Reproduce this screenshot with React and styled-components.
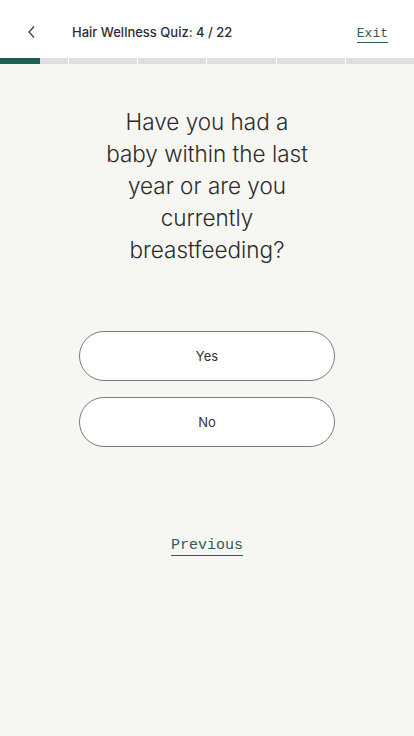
import React from 'react';
import styled, { createGlobalStyle } from 'styled-components';

const GlobalStyle = createGlobalStyle`
  html, body {
    margin: 0;
    padding: 0;
    background: #f6f6f2;
  }
  body {
    font-family: Inter, "Liberation Sans", sans-serif;
    color: #2b2b2b;
  }
`;

const Page = styled.div`
  min-height: 736px;
  background: #f6f6f2;
  display: flex;
  flex-direction: column;
`;

const Header = styled.header`
  height: 58px;
  background: #fff;
  display: flex;
  align-items: center;
  padding: 6px 26px 0 24px;
  box-sizing: border-box;
`;

const BackButton = styled.button`
  background: none;
  border: none;
  padding: 0;
  width: 14px;
  height: 14px;
  display: flex;
  align-items: center;
  justify-content: center;
  color: #333;
  cursor: pointer;
`;

const Title = styled.div`
  margin-left: 34px;
  font-size: 13px;
  font-weight: 500;
  color: #2d2d2d;
  flex: 1;
`;

const MonoLink = styled.a`
  font-family: "Liberation Mono", "DejaVu Sans Mono", monospace;
  font-size: ${p => p.size || 13}px;
  color: #2f5c56;
  text-decoration: none;
  border-bottom: 1px solid #2f5c56;
  padding-bottom: 1px;
  line-height: 1.1;
  cursor: pointer;
`;

const ExitLink = styled(MonoLink)`
  margin-top: 6px;
`;

const Progress = styled.div`
  display: grid;
  grid-template-columns: repeat(6, 1fr);
  gap: 1px;
  background: #fff;
  height: 6px;
`;

const Segment = styled.div`
  background: #dedede;
  position: relative;
  overflow: hidden;
`;

const Fill = styled.div`
  position: absolute;
  left: 0;
  top: 0;
  bottom: 0;
  background: #1f5d55;
`;

const Main = styled.main`
  display: flex;
  flex-direction: column;
  align-items: center;
  padding-top: 42px;
`;

const Question = styled.h1`
  margin: 0;
  width: 260px;
  text-align: center;
  font-size: 22.5px;
  font-weight: 300;
  line-height: 32px;
  color: #2b2b2b;
  letter-spacing: 0;
`;

const Options = styled.div`
  margin-top: 65px;
  display: flex;
  flex-direction: column;
  gap: 16px;
`;

const Option = styled.button`
  width: 256px;
  height: 50px;
  border: 1px solid #7a7a7a;
  border-radius: 25px;
  background: #fff;
  font-family: Inter, "Liberation Sans", sans-serif;
  font-size: 13px;
  color: #333;
  cursor: pointer;
`;

const Footer = styled.div`
  margin-top: 86px;
`;

export default function App() {
  return (
    <Page>
      <GlobalStyle />
      <Header>
        <BackButton aria-label="Back">
          <svg width="9" height="14" viewBox="0 0 9 14" fill="none">
            <path d="M7 1.5 L2 7 L7 12.5" stroke="#444" strokeWidth="1.4" />
          </svg>
        </BackButton>
        <Title>Hair Wellness Quiz: 4 / 22</Title>
        <ExitLink size={13}>Exit</ExitLink>
      </Header>
      <Progress>
        {[0, 1, 2, 3, 4, 5].map(i => (
          <Segment key={i}>
            {i === 0 && <Fill style={{ width: '59%' }} />}
          </Segment>
        ))}
      </Progress>
      <Main>
        <Question>
          Have you had a<br />
          baby within the last<br />
          year or are you<br />
          currently<br />
          breastfeeding?
        </Question>
        <Options>
          <Option>Yes</Option>
          <Option>No</Option>
        </Options>
        <Footer>
          <MonoLink size={15}>Previous</MonoLink>
        </Footer>
      </Main>
    </Page>
  );
}
